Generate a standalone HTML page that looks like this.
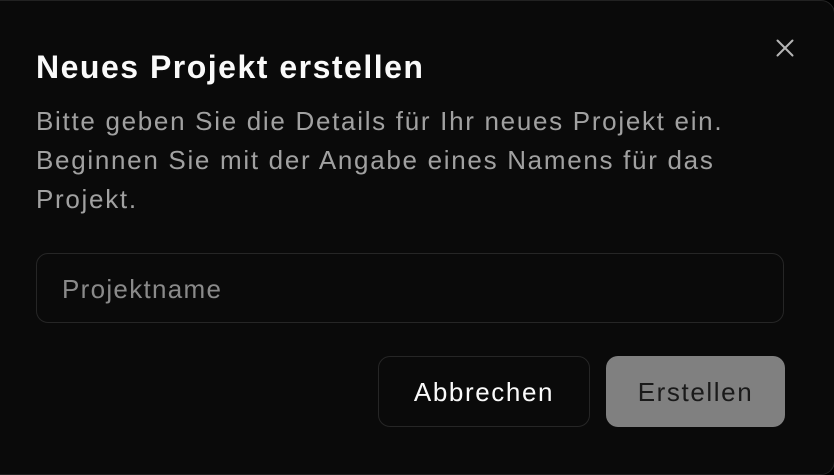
<!DOCTYPE html>
<html><head><meta charset="utf-8"><style>
html,body{margin:0;padding:0;background:#000;}
body{width:834px;height:474px;overflow:hidden;font-family:"Liberation Sans",sans-serif;}
.d{position:absolute;left:-20px;top:0;width:853px;height:473px;background:#0a0a0a;border:1px solid #222;border-radius:14px;}
.t{position:absolute;left:36px;top:47px;font-size:32px;letter-spacing:1.5px;font-weight:bold;color:#fafafa;line-height:40px;white-space:nowrap;}
.p{position:absolute;left:36px;top:102px;font-size:26px;letter-spacing:1.7px;line-height:39px;color:#a1a1a1;white-space:nowrap;}
.in{position:absolute;left:36px;top:253px;width:746px;height:68px;border:1px solid #262626;border-radius:12px;box-sizing:content-box;}
.in span{position:absolute;left:25px;top:20px;font-size:26px;letter-spacing:1.3px;line-height:30px;color:#8a8a8a;}
.b{position:absolute;top:356px;height:71px;border-radius:12px;box-sizing:border-box;font-size:26px;letter-spacing:1.6px;display:flex;align-items:center;justify-content:center;padding-top:2px;}
.b1{left:378px;width:212px;border:1px solid #262626;color:#fafafa;background:#0a0a0a;}
.b2{left:606px;width:179px;background:#808080;color:#1a1a1a;}
svg{position:absolute;left:776px;top:39px;}
</style></head><body>
<div class="d"></div>
<div class="t">Neues Projekt erstellen</div>
<div class="p">Bitte geben Sie die Details für Ihr neues Projekt ein.<br>Beginnen Sie mit der Angabe eines Namens für das<br>Projekt.</div>
<div class="in"><span>Projektname</span></div>
<div class="b b1">Abbrechen</div>
<div class="b b2">Erstellen</div>
<svg width="18" height="18" viewBox="0 0 18 18"><path d="M1.5 1.5L16.5 16.5M16.5 1.5L1.5 16.5" stroke="#b5b5b5" stroke-width="2" stroke-linecap="round"/></svg>
</body></html>
